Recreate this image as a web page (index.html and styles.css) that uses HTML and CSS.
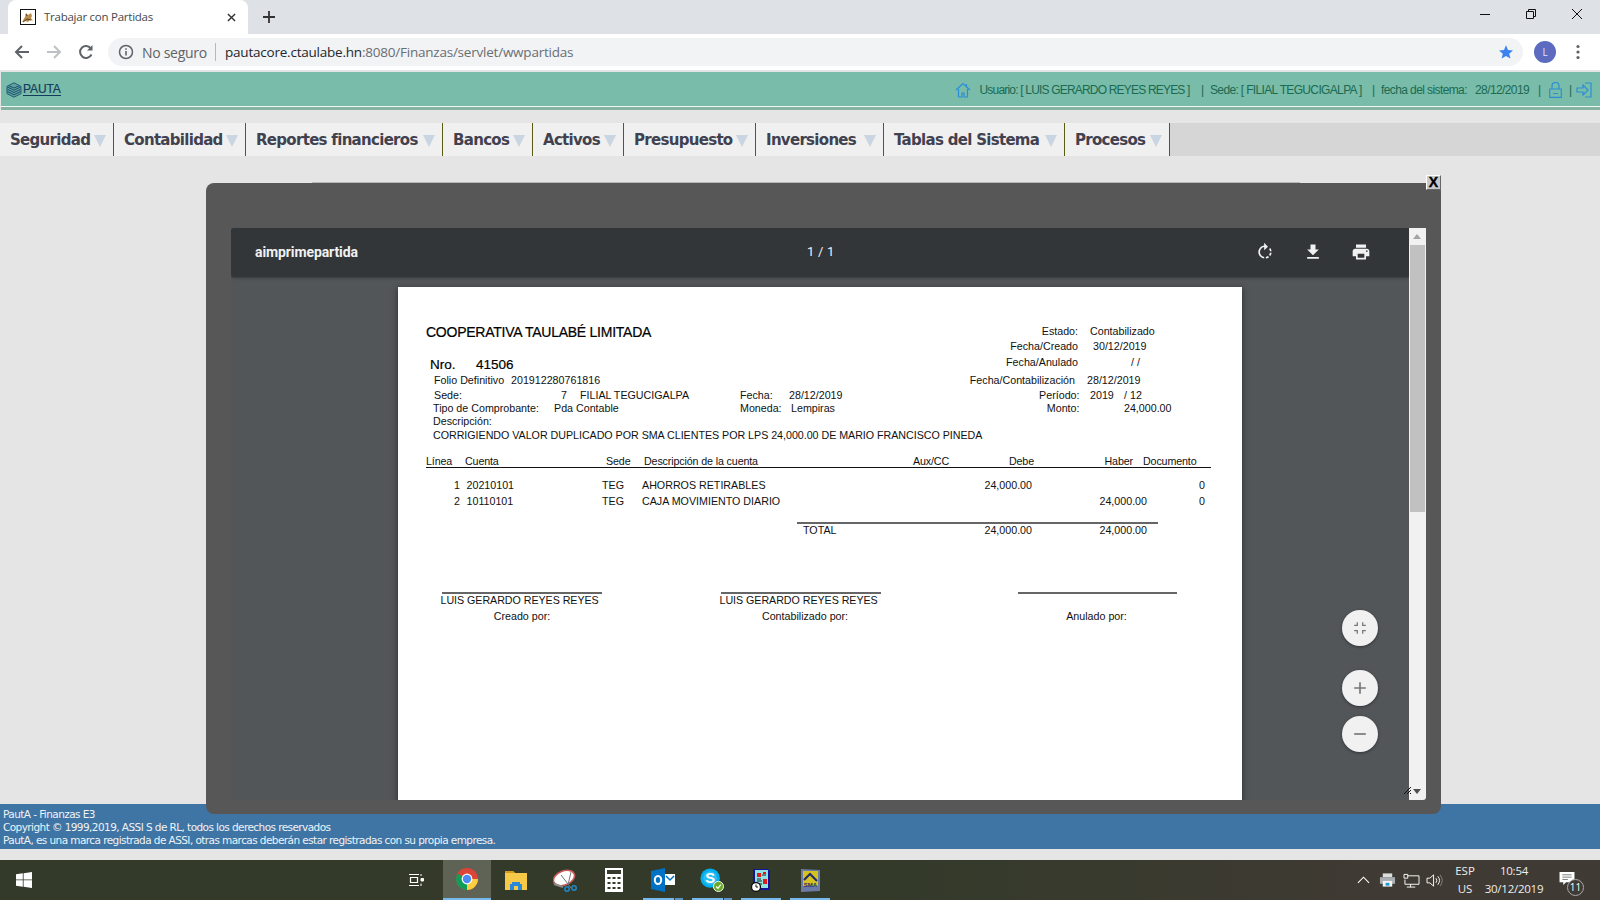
FILE: index.html
```html
<!DOCTYPE html>
<html lang="es">
<head>
<meta charset="utf-8">
<title>Trabajar con Partidas</title>
<link rel="stylesheet" href="styles.css">
</head>
<body>
<div class="tabstrip">
  <div class="tab">
    <svg class="favicon" viewBox="0 0 16 16"><rect x=".5" y=".5" width="15" height="15" fill="#fff" stroke="#111"/><path d="M2 13l3-5 1-4 2 2 3-2 1 3-1 2 2 3-3-1-2 2-3-1z" fill="#b98d4e"/><path d="M3 13l4-3 4 1M6 5l1 2" stroke="#54401f" fill="none"/></svg>
    <span class="tab-title">Trabajar con Partidas</span>
    <svg class="tab-close" viewBox="0 0 10 10"><path d="M1 1l8 8M9 1l-8 8" stroke="#333" stroke-width="1.6"/></svg>
  </div>
  <svg class="tab-new" viewBox="0 0 14 14"><path d="M7 1v12M1 7h12" stroke="#333" stroke-width="1.8"/></svg>
  <div class="winctl">
    <svg viewBox="0 0 12 12"><path d="M1 6.5h10" stroke="#111"/></svg>
    <svg viewBox="0 0 12 12"><path d="M1.5 3.5h7v7h-7zM3.5 3.5v-2h7v7h-2" fill="none" stroke="#111"/></svg>
    <svg viewBox="0 0 12 12"><path d="M1 1l10 10M11 1L1 11" stroke="#111"/></svg>
  </div>
</div>
<div class="navbar">
  <svg class="nav-ico" viewBox="0 0 16 16"><path d="M15 8H2M8 2L2 8l6 6" fill="none" stroke="#5f6368" stroke-width="2"/></svg>
  <svg class="nav-ico" viewBox="0 0 16 16"><path d="M1 8h13M8 2l6 6-6 6" fill="none" stroke="#bdc1c6" stroke-width="2"/></svg>
  <svg class="nav-ico" viewBox="0 0 16 16"><path d="M13.5 10.5A6 6 0 1 1 13 4.5" fill="none" stroke="#5f6368" stroke-width="2"/><path d="M14.5 1v5.5H9z" fill="#5f6368"/></svg>
  <div class="omnibox">
    <svg class="info" viewBox="0 0 16 16"><circle cx="8" cy="8" r="6.5" fill="none" stroke="#5f6368" stroke-width="1.5"/><path d="M8 7v4.5M8 4.2v1.6" stroke="#5f6368" stroke-width="1.6"/></svg>
    <span class="no-seguro">No seguro</span>
    <span class="omni-sep"></span>
    <span class="url"><b>pautacore.ctaulabe.hn</b>:8080/Finanzas/servlet/wwpartidas</span>
    <svg class="star" viewBox="0 0 24 24"><path d="M12 2l3 7 7.500.6-5.700 4.900 1.800 7.400L12 18l-6.600 3.900 1.800-7.400L1.500 9.600 9 9z" fill="#3b82f0"/></svg>
  </div>
  <span class="avatar">L</span>
  <svg class="dots" viewBox="0 0 4 16"><circle cx="2" cy="2.500" r="1.600" fill="#5f6368"/><circle cx="2" cy="8" r="1.600" fill="#5f6368"/><circle cx="2" cy="13.500" r="1.600" fill="#5f6368"/></svg>
</div>
<div class="nav-rule"></div>
<header class="apphead">
  <div class="logo">
    <svg viewBox="0 0 16 16"><path d="M8 .8l7 3.600v7.200l-7 3.600-7-3.600V4.400z" fill="#5fa39a" stroke="#1f5a7a"/><path d="M1.500 5L8 8.200 14.500 5M1.500 7.300L8 10.500l6.500-3.200M1.500 9.600L8 12.800l6.500-3.200M3 3.800L8 6l5-2.200" fill="none" stroke="#1f4f73"/></svg>
    <span>PAUTA</span>
  </div>
  <div class="session">
    <svg class="home" viewBox="0 0 16 16"><path d="M1 8l7-6.500L15 8M3.500 7v8h3.500v-4h2v4h3.500V7M11.500 2v3" fill="none" stroke="#2a8ed6" stroke-width="1.200"/></svg>
    <span class="s-user">Usuario: [ LUIS GERARDO REYES REYES ]</span>
    <span class="s-bar">|</span>
    <span class="s-sede">Sede: [ FILIAL TEGUCIGALPA ]</span>
    <span class="s-bar">|</span>
    <span class="s-fecha">fecha del sistema:</span>
    <span class="s-date">28/12/2019</span>
    <span class="s-bar s-bar-b">|</span>
    <svg class="lock" viewBox="0 0 13 16"><path d="M3 7V4a3.500 3.500 0 0 1 7 0v3M.7 7h11.600v8.300H.7zM4 11.500h5" fill="none" stroke="#2a8ed6" stroke-width="1.200"/></svg>
    <span class="s-bar s-bar-c">|</span>
    <svg class="exit" viewBox="0 0 16 16"><path d="M9 1h6v14H9" fill="none" stroke="#2a8ed6" stroke-width="1.200"/><path d="M1 6h6V3l5 5-5 5v-3H1z" fill="none" stroke="#2a8ed6" stroke-width="1.200"/></svg>
  </div>
</header>
<div class="head-rule"></div>
<nav class="menu">
  <a class="m m1">Seguridad</a>
  <a class="m m2">Contabilidad</a>
  <a class="m m3">Reportes financieros</a>
  <a class="m m4">Bancos</a>
  <a class="m m5">Activos</a>
  <a class="m m6">Presupuesto</a>
  <a class="m m7">Inversiones</a>
  <a class="m m8">Tablas del Sistema</a>
  <a class="m m9">Procesos</a>
</nav>
<main class="content"></main>
<footer class="appfoot">
  <div>PautA - Finanzas E3</div>
  <div>Copyright © 1999,2019, ASSI S de RL, todos los derechos reservados</div>
  <div>PautA, es una marca registrada de ASSI, otras marcas deberán estar registradas con su propia empresa.</div>
</footer>
<div class="foot-gap"></div>
<div class="taskbar">
  <svg class="win" viewBox="0 0 16 16"><path d="M0 2.300l6.800-1V7.500H0zM7.600 1.200L16 0v7.500H7.600zM0 8.300h6.800v6.400l-6.800-1zM7.600 8.300H16V16l-8.400-1.200z" fill="#fff"/></svg>
  <svg class="taskview" viewBox="0 0 16 16"><path d="M1 2.500h10M1 13.500h10M2.500 5.500h7v5h-7z" fill="none" stroke="#fff" stroke-width="1.200"/><path d="M13 2v2M13 6.500h2.500v2.500H13zM13 11.500v2.500" stroke="#fff" fill="#fff"/></svg>
  <div class="tb-app tb-active">
    <svg viewBox="0 0 24 24"><circle cx="12" cy="12" r="11" fill="#db4437"/><path d="M12 12L2.500 6.500A11 11 0 0 0 12 23z" fill="#0f9d58"/><path d="M12 12h11A11 11 0 0 1 12 23z" fill="#ffcd40"/><circle cx="12" cy="12" r="5.400" fill="#fff"/><circle cx="12" cy="12" r="4.200" fill="#4c8bf5"/></svg>
  </div>
  <div class="tb-app">
    <svg viewBox="0 0 24 24"><path d="M1 3h8l2 2h12v17H1z" fill="#f7c948"/><path d="M1 3h8l2 2H1z" fill="#d89a1c"/><path d="M8 14h8v2h2v6h-4v-4h-4v4H6v-6h2z" fill="#2b88d8"/></svg>
  </div>
  <div class="tb-app">
    <svg viewBox="0 0 24 24"><ellipse cx="11" cy="10" rx="11" ry="7" transform="rotate(-22 11 10)" fill="#fff" stroke="#c65a5a" stroke-width="1.600"/><path d="M1 16l9 3" stroke="#888" stroke-width="2"/><path d="M18 4l-3 13M8 7l10 13" stroke="#777" stroke-width="1"/><circle cx="14" cy="21" r="2.200" fill="none" stroke="#1f88c9" stroke-width="1.500"/><circle cx="21" cy="20" r="2.200" fill="none" stroke="#1f88c9" stroke-width="1.500"/></svg>
  </div>
  <div class="tb-app">
    <svg class="calc" viewBox="0 0 18 24"><rect width="18" height="24" fill="#fff"/><rect x="2" y="2" width="14" height="4" fill="#333a2b"/><path d="M2.500 9h3v2h-3zM7.500 9h3v2h-3zM12.500 9h3v2h-3zM2.500 14h3v2h-3zM7.500 14h3v2h-3zM12.500 14h3v2h-3zM2.500 19h3v2h-3zM7.500 19h3v2h-3zM12.500 19h3v2h-3z" fill="#333a2b"/></svg>
  </div>
  <div class="tb-app tb-open">
    <svg viewBox="0 0 24 24"><path d="M0 3l14-3v24L0 21z" fill="#0072c6"/><rect x="14" y="6" width="10" height="11" fill="#fff"/><path d="M15 8l4 4 4-4" fill="none" stroke="#0072c6" stroke-width="1.500"/><ellipse cx="7" cy="12" rx="3.200" ry="4" fill="none" stroke="#fff" stroke-width="2"/></svg>
  </div>
  <div class="tb-app tb-open">
    <svg viewBox="0 0 26 26"><circle cx="11" cy="11" r="10.500" fill="#00aff0"/><circle cx="11" cy="11" r="7.500" fill="#fff" opacity=".18"/><text x="11" y="16.500" text-anchor="middle" class="skype-s">S</text><circle cx="20" cy="20" r="5.500" fill="#6aaa2a" stroke="#fff"/><path d="M17.500 20l2 2 3-4" fill="none" stroke="#fff" stroke-width="1.300"/></svg>
  </div>
  <div class="tb-app tb-open2">
    <svg viewBox="0 0 24 24"><path d="M4 1h15l2 2v19H4z" fill="#12129a"/><path d="M6 2h13v18H6z" fill="#8fe3e3"/><path d="M8 5h4v4H8zM14 4h3v2h-3zM14 11h4v5h-4z" fill="#e01818"/><path d="M13 7h4M8 11h4M8 13h5M9 16h4" stroke="#222"/><circle cx="7" cy="19" r="4.500" fill="#fff" stroke="#111" stroke-width="1.300"/><path d="M7 16.500V19h2" stroke="#111" fill="none"/></svg>
  </div>
  <div class="tb-app tb-open2">
    <svg viewBox="0 0 24 24"><path d="M3 1l19 1v21L3 24z" fill="#6c7aa6"/><path d="M5 3h15v15H5z" fill="#d6c21f"/><path d="M6 12l6-6 7 7" fill="none" stroke="#1c2a6e" stroke-width="2"/><text x="12.500" y="19" text-anchor="middle" class="sma">SMA</text></svg>
  </div>
  <div class="tray">
    <svg class="chev" viewBox="0 0 14 8"><path d="M1 7l6-6 6 6" fill="none" stroke="#fff" stroke-width="1.200"/></svg>
    <svg class="printer" viewBox="0 0 18 16"><path d="M4 1h10v4H4z" fill="#ddd"/><path d="M1 5h16v7H1z" fill="#a9adb1"/><path d="M4 9h10v6H4z" fill="#f3f3f3"/><path d="M7 11h4v3H7z" fill="#1d9ccf"/></svg>
    <svg class="netw" viewBox="0 0 18 16"><path d="M5 3h12v9H2V7M8 12v3M4 15h9M1 1.500h4v4H1z" fill="none" stroke="#fff"/></svg>
    <svg class="speaker" viewBox="0 0 18 16"><path d="M1 5.500h3L8 2v12l-4-3.500H1z" fill="none" stroke="#fff"/><path d="M10.500 5.500a4 4 0 0 1 0 5M12.500 3.500a7 7 0 0 1 0 9" fill="none" stroke="#fff"/><path d="M15 2a10 10 0 0 1 0 12" fill="none" stroke="#8a857c"/></svg>
    <div class="lang"><span>ESP</span><span>US</span></div>
    <div class="clock"><span>10:54</span><span>30/12/2019</span></div>
    <div class="notif">
      <svg viewBox="0 0 16 15"><path d="M0 0h16v11H7l-3 3v-3H0z" fill="#fff"/><path d="M3 3h10M3 5.500h10M3 8h6" stroke="#555" stroke-width=".8"/></svg>
      <span class="badge">11</span>
    </div>
  </div>
</div>

<section class="modal">
  <button class="modal-x">X</button>
  <div class="viewer">
    <div class="pdf">
      <div class="pdfbar">
        <span class="pdf-title">aimprimepartida</span>
        <span class="pdf-pages">1 / 1</span>
        <div class="pdf-tools">
          <svg viewBox="0 0 24 24"><path d="M15.550 5.550L11 1v3.070C7.060 4.560 4 7.920 4 12s3.050 7.440 7 7.930v-2.020c-2.840-.48-5-2.940-5-5.910s2.160-5.430 5-5.910V10l4.550-4.450zM19.930 11c-.17-1.390-.72-2.730-1.620-3.890l-1.420 1.420c.54.750.88 1.600 1.020 2.470h2.020zM13 17.900v2.020c1.390-.17 2.740-.71 3.900-1.610l-1.440-1.440c-.75.54-1.590.89-2.460 1.030zm3.890-2.420l1.420 1.410c.9-1.160 1.450-2.500 1.620-3.890h-2.020c-.14.870-.48 1.720-1.020 2.480z"/></svg>
          <svg viewBox="0 0 24 24"><path d="M19 9h-4V3H9v6H5l7 7 7-7zM5 18v2h14v-2H5z"/></svg>
          <svg viewBox="0 0 24 24"><path d="M19 8H5c-1.660 0-3 1.340-3 3v6h4v4h12v-4h4v-6c0-1.660-1.340-3-3-3zm-3 11H8v-5h8v5zm3-7c-.55 0-1-.45-1-1s.45-1 1-1 1 .45 1 1-.45 1-1 1zm-1-9H6v4h12V3z"/></svg>
        </div>
      </div>
      <div class="pdf-stage">
        <article class="sheet">
          <div class="rp-head">
            <div class="rp-left">
              <div class="rp-title">COOPERATIVA TAULABÉ LIMITADA</div>
              <div class="rp-nro"><span class="w-nro">Nro.</span><span>41506</span></div>
              <div class="rl rl-folio"><span class="w-folio">Folio Definitivo</span><span>201912280761816</span></div>
              <div class="rl rl-sede"><span class="w-sede">Sede:</span><span class="w-7">7</span><span>FILIAL TEGUCIGALPA</span></div>
              <div class="rl rl-tipo"><span class="w-tipo">Tipo de Comprobante:</span><span>Pda Contable</span></div>
              <div class="rl rl-desc">Descripción:</div>
              <div class="rl rl-corr">CORRIGIENDO VALOR DUPLICADO POR SMA CLIENTES POR LPS 24,000.00 DE MARIO FRANCISCO PINEDA</div>
            </div>
            <div class="rp-mid">
              <div class="rl rm1"><span class="w-fecha">Fecha:</span><span>28/12/2019</span></div>
              <div class="rl rm2"><span class="w-moneda">Moneda:</span><span>Lempiras</span></div>
            </div>
            <div class="rp-right">
              <div class="rr r1"><span class="lab">Estado:</span><span class="v6">Contabilizado</span></div>
              <div class="rr r2"><span class="lab">Fecha/Creado</span><span class="v9">30/12/2019</span></div>
              <div class="rr r3"><span class="lab">Fecha/Anulado</span><span class="v47">/ /</span></div>
              <div class="rr r4"><span class="lab lab-c">Fecha/Contabilización</span><span class="v3">28/12/2019</span></div>
              <div class="rr r5"><span class="lab lab-p">Período:</span><span class="v6 w-anio">2019</span><span>/ 12</span></div>
              <div class="rr r6"><span class="lab lab-p">Monto:</span><span class="v-monto">24,000.00</span></div>
            </div>
          </div>
          <div class="tb tb-h">
            <span>Línea</span><span class="ph3">Cuenta</span><span class="ph6">Sede</span><span class="ph4">Descripción de la cuenta</span><span class="ph3">Aux/CC</span><span class="num">Debe</span><span class="num pr15">Haber</span><span class="doc-h">Documento</span>
          </div>
          <div class="tb tb-r">
            <span class="num pr2">1</span><span class="ph5">20210101</span><span class="ph2">TEG</span><span class="ph2">AHORROS RETIRABLES</span><span></span><span class="num pr2">24,000.00</span><span></span><span class="num">0</span>
          </div>
          <div class="tb tb-r">
            <span class="num pr2">2</span><span class="ph5">10110101</span><span class="ph2">TEG</span><span class="ph2">CAJA MOVIMIENTO DIARIO</span><span></span><span></span><span class="num pr1">24,000.00</span><span class="num">0</span>
          </div>
          <div class="tot-line"></div>
          <div class="tb tb-t">
            <span></span><span></span><span></span><span class="tot-lab">TOTAL</span><span></span><span class="num pr2">24,000.00</span><span class="num pr1">24,000.00</span><span></span>
          </div>
          <div class="signs">
            <div class="sg sg1"><div class="sg-name">LUIS GERARDO REYES REYES</div><div class="sg-cap">Creado por:</div></div>
            <div class="sg sg2"><div class="sg-name">LUIS GERARDO REYES REYES</div><div class="sg-cap sg-cap2">Contabilizado por:</div></div>
            <div class="sg sg3"><div class="sg-name">&nbsp;</div><div class="sg-cap sg-cap3">Anulado por:</div></div>
          </div>
        </article>
      </div>
      <div class="fabs">
        <button class="fab fab-fit"><svg viewBox="0 0 24 24"><path d="M5 16h3v3h1.500v-4.500H5zM8 8H5v1.500h4.500V5H8zM14.500 19H16v-3h3v-1.500h-4.500zM16 8V5h-1.500v4.500H19V8z"/></svg></button>
        <button class="fab"><svg viewBox="0 0 24 24"><path d="M19 13h-6v6h-2v-6H5v-2h6V5h2v6h6z"/></svg></button>
        <button class="fab"><svg viewBox="0 0 24 24"><path d="M19 13H5v-2h14z"/></svg></button>
      </div>
    </div>
    <div class="scroll">
      <span class="sc-up"></span>
      <span class="sc-thumb"></span>
      <span class="sc-fill"></span>
      <span class="sc-down"></span>
    </div>
    <span class="grip"></span>
  </div>
</section>
</body>
</html>
```

FILE: styles.css
```css
* { box-sizing: border-box; }
html, body { margin: 0; height: 100%; }
body {
  width: 1600px; height: 900px; overflow: hidden; position: relative;
  display: flex; flex-direction: column;
  background: #e5e5e5; font-family: "Liberation Sans", Arial, sans-serif;
}
svg { display: block; flex: none; }

/* browser chrome */
.tabstrip { height: 34px; background: #dee1e6; display: flex; align-items: flex-end; flex: none; }
.tab {
  margin-left: 8px; width: 240px; height: 34px; background: #fff; border-radius: 8px 8px 0 0;
  display: flex; align-items: center; padding-left: 12px;
}
.favicon { width: 16px; height: 16px; }
.tab-title { margin-left: 8px; width: 172px; padding-bottom: 2px; font: 11.5px "Open Sans", sans-serif; letter-spacing: -.25px; color: #45494d; white-space: nowrap; }
.tab-close { width: 9px; height: 9px; margin-left: 11px; }
.tab-new { width: 14px; height: 14px; margin: 0 0 10px 14px; }
.winctl { margin-left: auto; height: 34px; display: flex; align-items: center; padding: 0 17px 6px 0; gap: 34px; }
.winctl svg { width: 12px; height: 12px; }

.navbar { height: 36px; background: #fff; display: flex; align-items: center; flex: none; padding-left: 14px; }
.nav-ico { width: 16px; height: 16px; margin-right: 16px; }
.nav-ico:nth-child(3) { margin-right: 14px; }
.omnibox {
  width: 1415px; height: 28px; border-radius: 14px; background: #f1f3f4;
  display: flex; align-items: center; padding-left: 10px;
}
.info { width: 16px; height: 16px; }
.no-seguro { margin-left: 8px; font: 14px "Open Sans", sans-serif; letter-spacing: -.3px; color: #5f6368; width: 66px; white-space: nowrap; }
.omni-sep { width: 1px; height: 18px; background: #b5b8bc; margin: 0 9px 0 7px; }
.url { font: 13.5px "Open Sans", sans-serif; letter-spacing: -.22px; color: #6a6e73; white-space: nowrap; width: 1273px; }
.url b { font-weight: 400; color: #24282c; }
.star { width: 16px; height: 16px; }
.avatar {
  width: 22px; height: 22px; border-radius: 50%; background: #5c6bc0; color: #dfe3f5; margin-left: 11px;
  display: flex; align-items: center; justify-content: center; font: 10px "Open Sans", sans-serif;
}
.dots { width: 4px; height: 16px; margin-left: 20px; }
.nav-rule { height: 2px; background: #e2e4e6; flex: none; }

/* app header */
.apphead { height: 34px; background: #79bca9; margin-left: 1px; display: flex; align-items: center; flex: none; padding-top: 1px; }
.logo { display: flex; align-items: center; margin-left: 5px; }
.logo svg { width: 16px; height: 16px; margin-right: 1px; }
.logo span { font: 12px "Liberation Sans", sans-serif; letter-spacing: -.1px; color: #143c5c; border-bottom: 1px solid #143c5c; line-height: 11px; -webkit-text-stroke: .2px #143c5c; }
.session { margin-left: auto; display: flex; align-items: center; font-size: 12px; color: #1b6a52; white-space: nowrap; }
.home { width: 16px; height: 16px; margin-right: 9px; }
.s-user { width: 221.500px; letter-spacing: -.81px; }
.s-bar { width: 9px; }
.s-sede { width: 162px; letter-spacing: -.65px; }
.s-fecha { width: 94px; letter-spacing: -.6px; }
.s-date { width: 63px; letter-spacing: -.6px; }
.s-bar-b { width: 11px; }
.lock { width: 13px; height: 16px; }
.s-bar-c { margin-left: 7px; width: 7px; }
.exit { width: 16px; height: 16px; margin-right: 8px; }
.head-rule { height: 4px; flex: none; margin-left: 1px; border-top: 1px solid #f0f6f3; background: #87b4a1; }

/* menu */
.menu { margin-top: 13px; height: 33px; background: #d6d6d6; display: flex; flex: none; }
.m {
  height: 33px; background: #f0f0f0; border-right: 1px solid #5a5a14; display: flex; align-items: center;
  padding: 1px 0 0 10px; font: bold 15px "DejaVu Sans", sans-serif; letter-spacing: -.7px; color: #41414f; white-space: nowrap; position: relative;
}
.m::after {
  content: ""; position: absolute; right: 7px; top: 12px; width: 0; height: 0;
  border-left: 6.5px solid transparent; border-right: 6.500px solid transparent; border-top: 12px solid #c9d5e0;
}
.m1 { width: 114px; }
.m2 { width: 132px; }
.m3 { width: 197px; }
.m4 { width: 90px; }
.m5 { width: 91px; }
.m6 { width: 132px; }
.m7 { width: 128px; }
.m8 { width: 181px; }
.m9 { width: 105px; }

.content { flex: 1; }

.appfoot {
  height: 45px; background: #3f75a4; color: #eef3f7; flex: none; padding: 4px 0 0 3px;
  font: 10.5px/13px "DejaVu Sans", sans-serif; letter-spacing: -.57px;
}
.foot-gap { height: 11px; flex: none; }

/* taskbar */
.taskbar {
  height: 40px; flex: none; display: flex; background: linear-gradient(90deg, #333a29 0%, #333a2a 55%, #3f3a33 85%, #3f3a34 100%);
  position: relative; align-items: center; padding-left: 16px;
}
.win { width: 16px; height: 16px; }
.taskview { width: 16px; height: 16px; margin: 0 19px 0 376px; }
.tb-app { width: 48px; height: 40px; margin-right: 1px; display: flex; align-items: center; justify-content: center; position: relative; }
.tb-app svg { width: 24px; height: 24px; }
.tb-app .calc { width: 18px; height: 24px; }
.tb-active { background: #5e6355; border-bottom: 2px solid #76b9ed; }
.tb-open::after { content: ""; position: absolute; left: 4px; bottom: 0; width: 40px; height: 2px; background: linear-gradient(90deg, #76b9ed 0 31px, #3f3a34 31px 32px, #5b93c2 32px); }
.tb-open2::after { content: ""; position: absolute; left: 4px; bottom: 0; width: 40px; height: 2px; background: #76b9ed; }
.skype-s { font: bold 16px "Liberation Sans", sans-serif; fill: #fff; }
.sma { font: bold 6px "Liberation Sans", sans-serif; fill: #1c2a6e; }
.tray { margin-left: auto; display: flex; align-items: center; color: #eee; font: 11.500px "Open Sans", sans-serif; height: 40px; }
.chev { width: 13px; height: 8px; margin-right: 9px; }
.printer { width: 17px; height: 16px; margin-right: 7px; }
.netw { width: 17px; height: 15px; margin-right: 6px; }
.speaker { width: 17px; height: 15px; margin-right: 4px; }
.lang, .clock { display: flex; flex-direction: column; align-items: center; line-height: 18px; white-space: nowrap; }
.lang { width: 36px; }
.clock { width: 60px; margin-left: 1px; letter-spacing: -.25px; }
.notif { width: 41px; height: 40px; margin-left: 15px; position: relative; }
.notif svg { width: 16px; height: 14px; margin-top: 12px; }
.badge {
  position: absolute; left: 8px; top: 19px; width: 17px; height: 17px; border-radius: 50%;
  background: #3f3a34; border: 1px solid #aaa; color: #fff; font-size: 10px; line-height: 15px; text-align: center;
}

/* modal over the page */
.modal {
  position: absolute; left: 206px; top: 183px; width: 1235px; height: 631px; background: #575757;
  border-radius: 8px; padding: 45px 15px 14px 25px;
}
.modal::before { content: ""; position: absolute; left: 106px; top: -1px; width: 988px; height: 1px; background: #b5b5b5; }
.modal-x {
  position: absolute; right: 0; top: -8px; width: 15px; height: 15px; padding: 0; background: #c9c9c9;
  border: 1px solid; border-color: #fff #666 #666 #fff; font: bold 14px/13px "Liberation Sans", sans-serif; color: #000; -webkit-text-stroke: .4px #000;
  display: flex; align-items: center; justify-content: center;
}
.viewer { height: 572px; display: flex; position: relative; }
.pdf { width: 1178px; display: flex; flex-direction: column; position: relative; background: #525659; overflow: hidden; }
.pdfbar {
  height: 49px; flex: none; background: #323639; display: flex; align-items: center; border-radius: 3px 0 0 3px; padding-bottom: 2px;
  box-shadow: 0 1px 3px rgba(0,0,0,.35); position: relative; z-index: 1; color: #f1f1f1; font-family: Roboto, sans-serif;
}
.pdf-title { margin-left: 24px; width: 551px; font-size: 14px; font-weight: 700; letter-spacing: -.1px; }
.pdf-pages { font-size: 13px; letter-spacing: .2px; width: 27px; white-space: nowrap; padding-left: 1px; }
.pdf-tools { margin-left: auto; display: flex; gap: 28px; padding-right: 38px; }
.pdf-tools svg { width: 20px; height: 20px; fill: #f1f1f1; }
.pdf-stage { flex: 1; padding: 10px 0 0 167px; }
.sheet {
  width: 844px; height: 600px; background: #fff; padding: 37px 0 0 28px; color: #111;
  box-shadow: 0 2px 6px rgba(0,0,0,.5); font-size: 10.7px;
}
.rp-head { display: flex; height: 119px; }
.rp-left { width: 314px; white-space: nowrap; }
.rp-title { height: 16px; line-height: 16px; font-size: 14px; margin-bottom: 16px; letter-spacing: -.25px; color: #000; -webkit-text-stroke: .2px #000; }
.rp-nro { height: 16px; line-height: 18px; font-size: 13.500px; padding-left: 4px; display: flex; color: #000; -webkit-text-stroke: .2px #000; }
.w-nro { width: 46px; }
.rl { display: flex; white-space: nowrap; }
.rl-folio { height: 16px; line-height: 16px; padding-left: 8px; }
.w-folio { width: 77px; }
.rl-sede { height: 14px; line-height: 14px; padding-left: 8px; }
.w-sede { width: 127px; }
.w-7 { width: 19px; }
.rl-tipo { height: 13px; line-height: 13px; padding-left: 7px; }
.w-tipo { width: 121px; }
.rl-desc { height: 12px; line-height: 12px; padding-left: 7px; }
.rl-corr { height: 16px; line-height: 16px; padding-left: 7px; letter-spacing: -.025px; }
.rp-mid { width: 200px; padding-top: 64px; }
.rm1 { height: 14px; line-height: 14px; }
.rm2 { height: 13px; line-height: 13px; }
.w-fecha { width: 49px; }
.w-moneda { width: 51px; }
.rp-right { width: 240px; }
.rr { display: flex; white-space: nowrap; }
.r1 { height: 14px; line-height: 14px; }
.r2 { height: 16px; line-height: 16px; }
.r3 { height: 18px; line-height: 16px; }
.r4 { height: 17px; line-height: 17px; }
.r5, .r6 { height: 13px; line-height: 13px; }
.lab { width: 144px; text-align: right; padding-right: 6px; }
.lab-c { padding-right: 9px; }
.lab-p { padding-right: 4.500px; }
.v3 { margin-left: 3px; }
.v6 { margin-left: 6px; }
.v9 { margin-left: 9px; }
.v47 { margin-left: 47px; }
.w-anio { width: 34px; }
.v-monto { width: 87.500px; text-align: right; }

.tb {
  display: grid; grid-template-columns: 36px 138px 40px 270px 50px 74px 114px 57px;
  width: 779px; white-space: nowrap;
}
.tb span { min-width: 0; }
.tb-h { margin-top: 12px; height: 13px; line-height: 12px; border-bottom: 1px solid #111; width: 785px; letter-spacing: -.13px; }
.tb-r { height: 16px; line-height: 16px; }
.tb-h + .tb-r { margin-top: 9px; }
.num { text-align: right; }
.doc-h { margin-left: -5px; }
.ph2 { padding-left: 2px; }
.ph3 { padding-left: 3px; }
.ph4 { padding-left: 4px; }
.ph5 { padding-left: 4.500px; }
.ph6 { padding-left: 6px; }
.pr1 { padding-right: 1px; }
.pr2 { padding-right: 2px; }
.pr15 { padding-right: 15px; }
.tot-line { height: 2px; background: #666; margin: 13px 0 0 371px; width: 361px; }
.tb-t { height: 13px; line-height: 13px; }
.tot-lab { padding-left: 163px; }
.signs { display: flex; margin: 55px 0 0 16px; }
.sg { border-top: 2px solid #666; width: 160px; white-space: nowrap; }
.sg2 { margin-left: 119px; }
.sg3 { margin-left: 137px; width: 159px; }
.sg-name { height: 14px; line-height: 12px; margin-left: -1.500px; letter-spacing: -.04px; }
.sg-cap { height: 16px; line-height: 16px; text-align: center; }
.sg-cap2 { padding-left: 8px; }
.sg-cap3 { padding-right: 2px; }

.fabs { position: absolute; left: 1111px; top: 382px; display: flex; flex-direction: column; gap: 10px; }
.fab {
  width: 36px; height: 36px; border-radius: 50%; border: 0; padding: 0; background: #f1f1f1;
  box-shadow: 0 1px 3px rgba(0,0,0,.4); display: flex; align-items: center; justify-content: center;
}
.fab svg { width: 20px; height: 20px; fill: #777; }
.fab-fit { margin-bottom: 14px; }

.scroll { width: 17px; background: #f1f1f1; display: flex; flex-direction: column; border-radius: 0 0 3px 0; align-items: center; }
.sc-up { height: 17px; flex: none; width: 100%; position: relative; }
.sc-up::after { content: ""; position: absolute; left: 4px; top: 6px; border: 4px solid transparent; border-top: 0; border-bottom: 5px solid #a3a3a3; }
.sc-thumb { height: 267px; background: #c1c1c1; width: 15px; flex: none; }
.sc-fill { flex: 1; }
.sc-down { height: 17px; flex: none; width: 100%; position: relative; }
.sc-down::after { content: ""; position: absolute; left: 4px; top: 6px; border: 4px solid transparent; border-bottom: 0; border-top: 5px solid #505050; }
.grip {
  position: absolute; left: 1172px; bottom: 6px; width: 8px; height: 8px;
  background: repeating-linear-gradient(135deg, #111 0 1px, transparent 1px 2px);
  clip-path: polygon(100% 0, 100% 100%, 0 100%);
}
```
